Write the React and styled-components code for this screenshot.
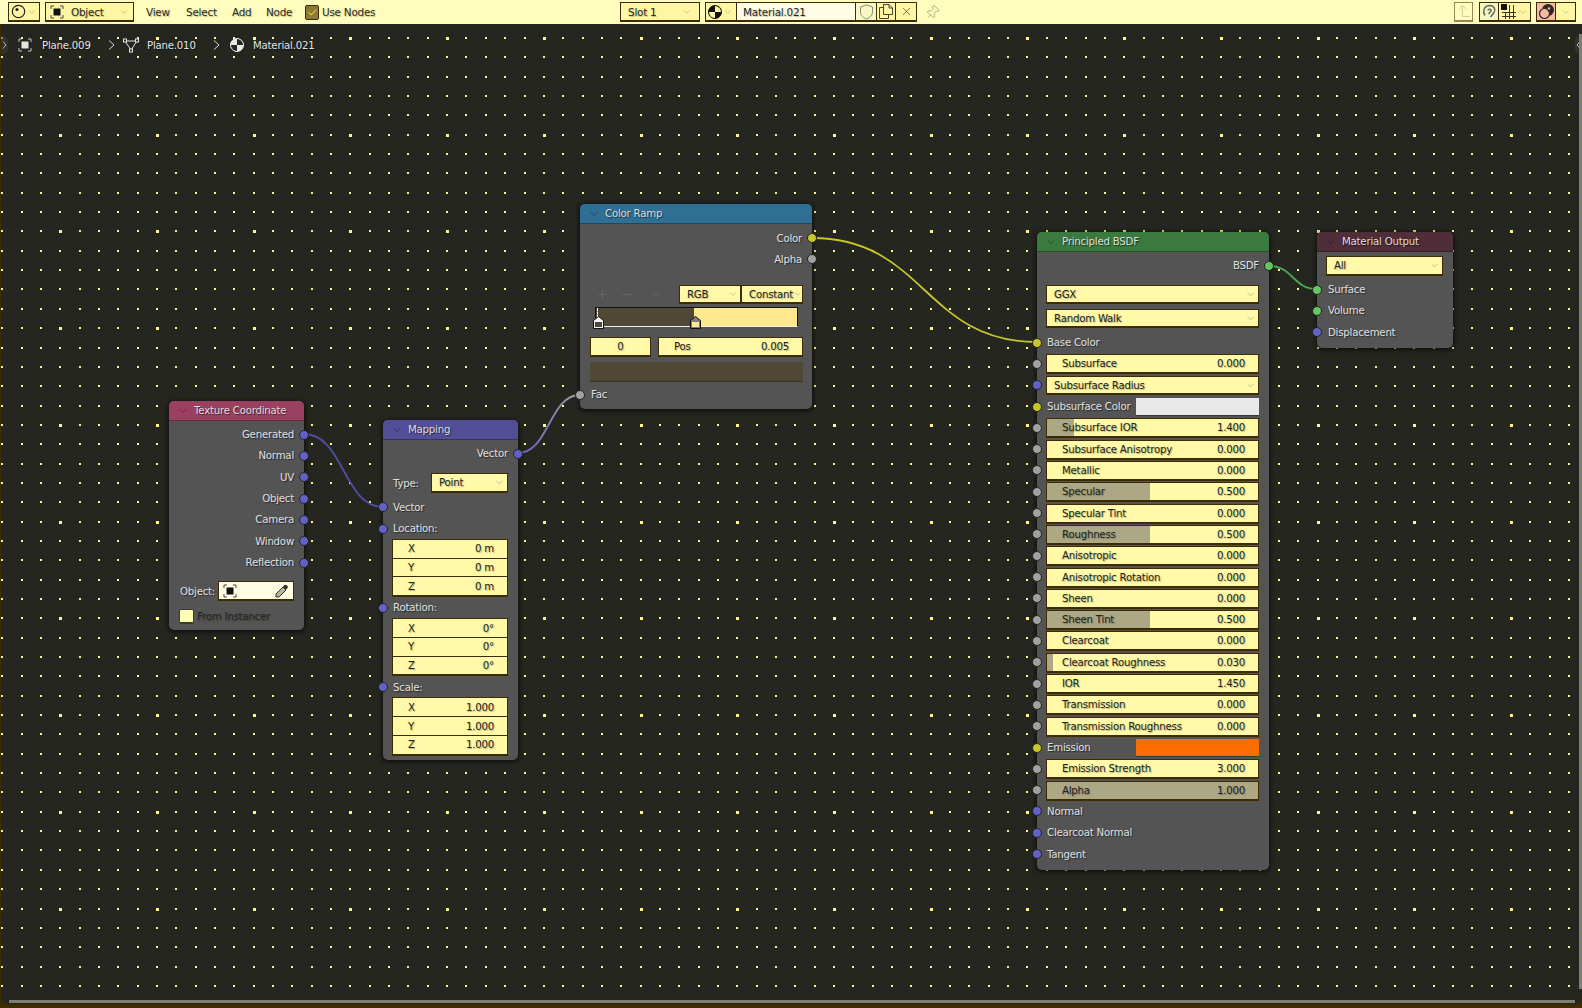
import React from 'react';
import styled, { createGlobalStyle } from 'styled-components';
import { Plus, Minus, ChevronDown, X, Pin, Check } from 'lucide-react';

const FONT = '"DejaVu Sans", "Liberation Sans", sans-serif';
const INK = '#3e2c00';

const GlobalStyle = createGlobalStyle`
  html, body { margin: 0; padding: 0; background: #fffdbe; }
  * { box-sizing: border-box; }
`;

const Page = styled.div`
  width: 1582px;
  height: 1008px;
  display: flex;
  flex-direction: column;
  overflow: hidden;
  font-family: ${FONT};
  font-size: 10.2px;
  letter-spacing: -0.22px;
  background: ${INK};
`;

const Header = styled.header`
  height: 24px;
  flex: none;
  display: flex;
  align-items: center;
  padding-left: 8px;
  background: #fffdbe;
  color: #2a2a22;
  font-size: 10.4px;
`;

const HeadButton = styled.div`
  height: 20px;
  width: ${p => p.$w}px;
  margin-left: ${p => p.$ml || 0}px;
  flex: none;
  display: flex;
  align-items: center;
  gap: ${p => p.$gap ?? 3}px;
  padding: 0 ${p => p.$pad ?? 3}px;
  background: ${p => p.$bg || '#fff6a4'};
  border: 1px solid ${INK};
  border-bottom-width: 2px;
  border-left-width: ${p => (p.$joined ? 0 : 1)}px;
  justify-content: ${p => (p.$center ? 'center' : 'flex-start')};
  color: #28281f;
  text-shadow: 1px 1px 1px rgba(0, 0, 0, 0.25);
  opacity: ${p => p.$dim || 1};
`;

const HeadText = styled.span`
  flex: 1;
  white-space: nowrap;
`;

const MenuItem = styled.span`
  width: ${p => p.$w}px;
  margin-left: ${p => p.$ml || 0}px;
  flex: none;
  color: #2d2d24;
  white-space: nowrap;
  text-shadow: 1px 1px 1px rgba(0, 0, 0, 0.25);
`;

const CheckBox = styled.span`
  width: 14px;
  height: 15px;
  margin-right: 3px;
  display: flex;
  align-items: center;
  justify-content: center;
  background: #8a7a35;
  border: 1px solid ${INK};
  border-radius: 2px;
  flex: none;
  color: #ffd21c;
`;

const Canvas = styled.main`
  position: relative;
  flex: none;
  height: 980px;
  margin-left: 1px;
  background: #262620;
  border-radius: 0 0 5px 5px;
  overflow: hidden;
`;

const Backdrop = styled.svg`
  position: absolute;
  left: -1px;
  top: -24px;
  width: 1582px;
  height: 1008px;
  pointer-events: none;
`;

const Crumbs = styled.nav`
  position: absolute;
  left: 17px;
  top: 12px;
  height: 18px;
  display: flex;
  align-items: center;
  color: #e3e3e3;
  text-shadow: 1px 1px 1px rgba(0, 0, 0, 0.6);
`;

const CrumbText = styled.span`
  width: ${p => p.$w}px;
  margin-left: ${p => p.$ml}px;
  flex: none;
  white-space: nowrap;
`;

const CrumbArrow = styled.svg`
  margin: 0 ${p => p.$right}px 0 ${p => p.$left}px;
  flex: none;
`;

const SideTab = styled.div`
  position: absolute;
  top: 12px;
  ${p => (p.$right ? 'right: 0;' : 'left: 0;')}
  width: 7px;
  height: 18px;
  display: flex;
  align-items: center;
  justify-content: center;
  background: rgba(60, 60, 60, 0.55);
  color: #b5b5b5;
  border-radius: ${p => (p.$right ? '5px 0 0 5px' : '0 5px 5px 0')};
`;

const HScroll = styled.div`
  position: absolute;
  left: 8px;
  right: 7px;
  bottom: 1px;
  height: 3px;
  background: #7f7e72;
`;

const VScroll = styled.div`
  position: absolute;
  right: 0;
  top: 10px;
  bottom: 15px;
  width: 3px;
  background: #7f7e72;
`;

const NodeBox = styled.section`
  position: absolute;
  left: ${p => p.$x - 1}px;
  top: ${p => p.$y - 24}px;
  width: ${p => p.$w}px;
  height: ${p => p.$h}px;
  background: #545454;
  border-radius: 5px;
  box-shadow: 0 1px 4px 1px rgba(0, 0, 0, 0.65);
  color: #e4e4e4;
`;

const NodeTitle = styled.div`
  height: 20px;
  display: flex;
  align-items: center;
  padding-left: 25px;
  position: relative;
  background: ${p => p.$color};
  border-radius: 5px 5px 0 0;
  border-bottom: 1px solid rgba(0, 0, 0, 0.35);
  color: #dcdcdc;
  text-shadow: 1px 1px 1px rgba(0, 0, 0, 0.55);
  white-space: nowrap;
`;

const TitleArrow = styled(ChevronDown)`
  position: absolute;
  left: 8px;
  top: 4px;
  color: rgba(0, 0, 0, 0.5);
`;

const NodeBody = styled.div`
  padding: ${p => p.$top ?? 3}px 10px 0 9px;
`;

const Row = styled.div`
  position: relative;
  height: 21.32px;
  margin-top: ${p => p.$mt || 0}px;
  display: flex;
  align-items: center;
  justify-content: ${p => (p.$right ? 'flex-end' : 'flex-start')};
  white-space: nowrap;
  text-shadow: 1px 1px 1px rgba(0, 0, 0, 0.55);
`;

const Socket = styled.span`
  position: absolute;
  top: 50%;
  ${p => (p.$out ? 'right: -15px;' : 'left: -14px;')}
  width: 10px;
  height: 10px;
  margin-top: -5px;
  border-radius: 50%;
  background: ${p => p.$color};
  border: 1px solid #23231e;
  z-index: 2;
`;

const Label = styled.span`
  padding-left: ${p => p.$indent ?? 1}px;
  color: #e0e0e0;
`;

const Field = styled.div`
  flex: ${p => (p.$w ? 'none' : 1)};
  width: ${p => (p.$w ? `${p.$w}px` : 'auto')};
  height: ${p => p.$h || 20}px;
  margin-top: ${p => p.$mt || 0}px;
  display: flex;
  align-items: center;
  justify-content: ${p => (p.$center ? 'center' : 'space-between')};
  padding: 0 ${p => p.$padR ?? 13}px 0 ${p => p.$padL ?? 15}px;
  background: ${p =>
    p.$fill
      ? `linear-gradient(to right, #aca886 ${p.$fill}%, #fff9a8 ${p.$fill}%)`
      : '#fff9a8'};
  border: 1px solid ${INK};
  border-bottom-width: 2px;
  color: #22221a;
  text-shadow: 1px 1px 1px rgba(0, 0, 0, 0.28);
  white-space: nowrap;
`;

const FieldStack = styled.div`
  height: 58.3px;
  margin-top: -0.4px;
  display: flex;
  flex-direction: column;
  border: 1px solid ${INK};
  border-bottom-width: 2px;
`;

const StackCell = styled.div`
  flex: 1;
  display: flex;
  align-items: center;
  justify-content: space-between;
  padding: 0 13px 0 15px;
  background: #fff9a8;
  color: #22221a;
  border-top: ${p => (p.$first ? 0 : `1px solid ${INK}`)};
  text-shadow: 1px 1px 1px rgba(0, 0, 0, 0.28);
`;

const Swatch = styled.div`
  margin-left: auto;
  width: ${p => p.$w}px;
  height: 18px;
  flex: none;
  background: ${p => p.$color};
  border-bottom: 1px solid #3a3a30;
`;

const Caret = styled(ChevronDown)`
  color: #a7a37a;
  flex: none;
`;

const SelectField = ({ text, mt, h = 19 }) => (
  <Field $mt={mt} $h={h} $padL={7} $padR={2}>
    <span>{text}</span>
    <Caret size={11} strokeWidth={1.4} />
  </Field>
);

// the ramp's controls sit one pixel further right than the socket rows
const RampControls = styled.div`
  margin: 0 -1px 0 1px;
`;

const RampTools = styled.div`
  height: 19px;
  margin-top: 15px;
  display: flex;
  align-items: center;
  color: #6c6c6c;
`;

const ToolSlot = styled.span`
  width: ${p => p.$w}px;
  display: flex;
  justify-content: center;
  flex: none;
`;

const RampSelects = styled.div`
  margin-left: auto;
  display: flex;
  width: 124px;
`;

const RampBar = styled.div`
  position: relative;
  height: 20px;
  margin: 3px 5px 0 5px;
  border: 1px solid #111;
  border-bottom-color: #eee;
  background: linear-gradient(to right, #4f4835 49%, #ffe88e 49%);
`;

const RampHandle = styled.svg`
  position: absolute;
  left: ${p => p.$x}px;
  top: 8px;
  overflow: visible;
`;

const RampMark = styled.span`
  position: absolute;
  left: 1px;
  top: 0;
  height: 10px;
  border-left: 1px dashed #fff;
`;

const RampFields = styled.div`
  display: flex;
  gap: 7px;
  margin-top: 10px;
`;

const ColorStrip = styled.div`
  height: 20px;
  margin-top: 5px;
  background: #4f4835;
  border-bottom: 1px solid #3a3220;
`;

const ObjectField = styled.div`
  width: 78px;
  height: 20px;
  margin-left: 3px;
  display: flex;
  align-items: center;
  justify-content: space-between;
  padding: 0 4px 0 4px;
  background: #fffee4;
  border: 1px solid ${INK};
  border-bottom-width: 2px;
`;

const InstancerRow = styled.div`
  display: flex;
  align-items: center;
  height: 16px;
  margin-top: 6px;
  gap: 3px;
  color: #26261e;
  white-space: nowrap;
  text-shadow: 1px 1px 1px rgba(0, 0, 0, 0.3);
`;

const PlainCheck = styled.span`
  width: 15px;
  height: 15px;
  margin-left: 1px;
  background: #fffcb4;
  border: 1px solid #3a3a30;
  border-bottom-width: 2px;
  border-radius: 2px;
`;

const TypeRow = styled(Row)`
  height: 20px;
  margin-top: 9px;
  justify-content: space-between;
`;

const ObjectIcon = ({ size = 14, ink = '#111', frame = '#444' }) => (
  <svg width={size} height={size} viewBox="0 0 14 14" fill="none">
    <path d="M1 4V1h3M10 1h3v3M13 10v3h-3M4 13H1v-3" stroke={frame} strokeWidth="1" />
    <rect x="3.5" y="3.5" width="7" height="7" fill={ink} />
  </svg>
);

const MeshIcon = () => (
  <svg width="16" height="15" viewBox="0 0 16 15" fill="none" stroke="#e4e4e4" strokeWidth="1">
    <path d="M2 3L8 12L14 3Z" />
    <rect x="0.5" y="1" width="3" height="3" fill="#262620" />
    <rect x="12.5" y="1" width="3" height="3" fill="#262620" />
    <rect x="6.5" y="11" width="3" height="3" fill="#262620" />
  </svg>
);

const MaterialIcon = ({ size = 14, light = '#e8e8e8', dark = '#262620', ring }) => (
  <svg width={size} height={size} viewBox="0 0 14 14">
    <circle cx="7" cy="7" r="6.5" fill={light} stroke={ring || light} strokeWidth="1" />
    <path d="M7 7V1A6 6 0 0 1 13 7Z" fill={dark} />
    <path d="M7 7V13A6 6 0 0 1 1 7Z" fill={dark} />
  </svg>
);

const SphereIcon = () => (
  <svg width="15" height="15" viewBox="0 0 15 15" fill="none" stroke="#222" strokeWidth="1.2">
    <circle cx="7.5" cy="7.5" r="6.2" />
    <circle cx="6" cy="5.5" r="1.6" fill="#222" stroke="none" />
  </svg>
);

const ShieldIcon = () => (
  <svg width="15" height="16" viewBox="0 0 15 16" fill="none" stroke="#8f8d68" strokeWidth="1">
    <path d="M7.5 1L13.5 3V8C13.5 11.5 10.5 14 7.5 15C4.5 14 1.5 11.5 1.5 8V3Z" />
  </svg>
);

const CopyIcon = () => (
  <svg width="16" height="15" viewBox="0 0 16 15" fill="none" stroke="#444" strokeWidth="1">
    <path d="M5.5 3.5H1.5V14.5H10.5V10.5" />
    <path d="M5.5 0.5H11L14.5 4V10.5H5.5Z" />
    <path d="M11 0.5V4H14.5" />
  </svg>
);

const UpIcon = () => (
  <svg width="14" height="15" viewBox="0 0 14 15" fill="none" stroke="#b0ae80" strokeWidth="1">
    <path d="M2 5L5.5 1.5L9 5M5.5 2V12.5H13" />
  </svg>
);

const MagnetIcon = () => (
  <svg width="15" height="16" viewBox="0 0 15 16" fill="none" stroke="#66665a" strokeWidth="1.5">
    <path d="M3 11.5C0.5 8 1.5 2 7.5 1.5C12.5 1.5 14 6 12 8.5L8.5 13" />
    <path d="M5.8 6.5C6.5 4.5 9.5 5 9 7L6.5 10" />
  </svg>
);

const SnapGridIcon = () => (
  <svg width="16" height="16" viewBox="0 0 16 16" fill="none" stroke="#333" strokeWidth="1">
    <rect x="0" y="0" width="6" height="6" fill="#111" stroke="none" />
    <path d="M8.5 1V15M12.5 1V15M1 8.5H15M1 12.5H15M4.5 8V15" />
  </svg>
);

const OverlayIcon = () => (
  <svg width="17" height="17" viewBox="0 0 17 17" fill="none">
    <circle cx="10" cy="7" r="6" fill="#2a2a2a" />
    <circle cx="6.5" cy="10.5" r="5" stroke="#2a2a2a" strokeWidth="1.2" fill="#f9b9a0" />
    <circle cx="11" cy="5.5" r="1.2" fill="#f9b9a0" />
  </svg>
);

const PipetteIcon = () => (
  <svg width="14" height="14" viewBox="0 0 14 14" fill="none">
    <path d="M8 3L11 6L4 13H1V10Z" fill="#b5b5a0" stroke="#333" strokeWidth="1" />
    <path d="M9 1.5C10 0.5 11 0.5 12 1.5C13.2 2.7 13.2 3.7 12 4.8L10.5 6L7.8 3Z" fill="#333" />
  </svg>
);

const Arrow = ({ left, right }) => (
  <CrumbArrow $left={left} $right={right} width="7" height="10" viewBox="0 0 7 10" fill="none" stroke="#d6d6d6" strokeWidth="1">
    <path d="M1 0.5L6 5L1 9.5" />
  </CrumbArrow>
);

const BLUE = '#6161c8';
const GREY = '#a1a1a1';
const YELLOW = '#c7c729';
const GREEN = '#63c763';

// dots of the grid: small ones every 19.34px, big ones every fifth
const gridPath = big => {
  let d = '';
  for (let i = 0; i * 19.345 < 1582; i++) {
    for (let j = 0; 38 + j * 19.345 < 1000; j++) {
      const isBig = (i - 3) % 5 === 0 && j % 5 === 0;
      if (isBig !== big) continue;
      const s = big ? 3 : 2;
      const x = Math.round(1.2 + i * 19.345);
      const y = Math.round(37 + j * 19.345);
      d += `M${x} ${y}h${s}v${s}h-${s}z`;
    }
  }
  return d;
};

const wire = (x1, y1, x2, y2) => {
  const d = (x2 - x1) * 0.5;
  return `M${x1} ${y1}C${x1 + d} ${y1} ${x2 - d} ${y2} ${x2} ${y2}`;
};

const texOutputs = ['Generated', 'Normal', 'UV', 'Object', 'Camera', 'Window', 'Reflection'];

const bsdfRows = [
  { name: 'Subsurface', socket: GREY, value: '0.000' },
  { name: 'Subsurface Radius', socket: BLUE, select: true },
  { name: 'Subsurface Color', socket: YELLOW, color: '#e8e8e8' },
  { name: 'Subsurface IOR', socket: GREY, value: '1.400', fill: 13 },
  { name: 'Subsurface Anisotropy', socket: GREY, value: '0.000' },
  { name: 'Metallic', socket: GREY, value: '0.000' },
  { name: 'Specular', socket: GREY, value: '0.500', fill: 49 },
  { name: 'Specular Tint', socket: GREY, value: '0.000' },
  { name: 'Roughness', socket: GREY, value: '0.500', fill: 49 },
  { name: 'Anisotropic', socket: GREY, value: '0.000' },
  { name: 'Anisotropic Rotation', socket: GREY, value: '0.000' },
  { name: 'Sheen', socket: GREY, value: '0.000' },
  { name: 'Sheen Tint', socket: GREY, value: '0.500', fill: 49 },
  { name: 'Clearcoat', socket: GREY, value: '0.000' },
  { name: 'Clearcoat Roughness', socket: GREY, value: '0.030', fill: 3 },
  { name: 'IOR', socket: GREY, value: '1.450' },
  { name: 'Transmission', socket: GREY, value: '0.000' },
  { name: 'Transmission Roughness', socket: GREY, value: '0.000' },
  { name: 'Emission', socket: YELLOW, color: '#ff6c00' },
  { name: 'Emission Strength', socket: GREY, value: '3.000' },
  { name: 'Alpha', socket: GREY, value: '1.000', fill: 100 },
];

const Node = ({ title, color, x, y, w, h, children, top }) => (
  <NodeBox $x={x} $y={y} $w={w} $h={h}>
    <NodeTitle $color={color}>
      <TitleArrow size={12} strokeWidth={1.4} />
      {title}
    </NodeTitle>
    <NodeBody $top={top}>{children}</NodeBody>
  </NodeBox>
);

const Vec3 = ({ values }) => (
  <FieldStack>
    {['X', 'Y', 'Z'].map((axis, i) => (
      <StackCell key={axis} $first={i === 0}>
        <span>{axis}</span>
        <span>{values}</span>
      </StackCell>
    ))}
  </FieldStack>
);

const BsdfRow = ({ row }) => (
  <Row>
    <Socket $color={row.socket} />
    {row.select && <SelectField text={row.name} mt={1} h={19} />}
    {row.color && (
      <>
        <Label>{row.name}</Label>
        <Swatch $w={123} $color={row.color} />
      </>
    )}
    {row.value && (
      <Field $fill={row.fill} $mt={1}>
        <span>{row.name}</span>
        <span>{row.value}</span>
      </Field>
    )}
  </Row>
);

const App = () => (
  <Page>
    <GlobalStyle />
    <Header>
      <HeadButton $w={32} $pad={2} $gap={1}>
        <SphereIcon />
        <Caret size={10} strokeWidth={1.4} />
      </HeadButton>
      <HeadButton $w={89} $ml={5} $gap={7} $pad={4}>
        <ObjectIcon />
        <HeadText>Object</HeadText>
        <Caret size={10} strokeWidth={1.4} />
      </HeadButton>
      <MenuItem $ml={12} $w={40}>View</MenuItem>
      <MenuItem $w={46}>Select</MenuItem>
      <MenuItem $w={34}>Add</MenuItem>
      <MenuItem $w={39}>Node</MenuItem>
      <CheckBox>
        <Check size={11} strokeWidth={2.2} />
      </CheckBox>
      <MenuItem $w={60}>Use Nodes</MenuItem>
      <HeadButton $w={80} $ml={238} $pad={7}>
        <HeadText>Slot 1</HeadText>
        <Caret size={10} strokeWidth={1.4} />
      </HeadButton>
      <HeadButton $w={32} $ml={5} $pad={2} $gap={1}>
        <MaterialIcon light="#111" dark="#fff6a4" ring="#111" />
        <Caret size={10} strokeWidth={1.4} />
      </HeadButton>
      <HeadButton $w={119} $joined $bg="#fffee4" $pad={6}>
        <HeadText>Material.021</HeadText>
      </HeadButton>
      <HeadButton $w={21} $joined $bg="#f6f8c6" $pad={0} $center>
        <ShieldIcon />
      </HeadButton>
      <HeadButton $w={19} $joined $pad={0} $center>
        <CopyIcon />
      </HeadButton>
      <HeadButton $w={21} $joined $pad={0} $center>
        <X size={13} strokeWidth={1.1} />
      </HeadButton>
      <MenuItem $ml={8} $w={15}>
        <Pin size={15} strokeWidth={1} color="#8b8a6c" style={{ transform: 'rotate(40deg)', display: 'block' }} />
      </MenuItem>
      <HeadButton $w={19} $ml={514} $dim={0.55} $pad={0} $center $bg="#fffdbe">
        <UpIcon />
      </HeadButton>
      <HeadButton $w={20} $ml={6} $pad={0} $center $bg="#f4f6c2">
        <MagnetIcon />
      </HeadButton>
      <HeadButton $w={32} $joined $pad={2} $gap={1}>
        <SnapGridIcon />
        <Caret size={10} strokeWidth={1.4} />
      </HeadButton>
      <HeadButton $w={20} $ml={5} $pad={0} $center $bg="#f9b9a0">
        <OverlayIcon />
      </HeadButton>
      <HeadButton $w={20} $joined $pad={0} $center>
        <Caret size={10} strokeWidth={1.4} />
      </HeadButton>
    </Header>

    <Canvas>
      <Backdrop viewBox="0 0 1582 1008" shapeRendering="crispEdges">
        <path d={gridPath(false)} fill="#fff58c" />
        <path d={gridPath(true)} fill="#fff58c" />
      </Backdrop>

      <Crumbs>
        <ObjectIcon ink="#e4e4e4" frame="#c4c4c4" />
        <CrumbText $ml={10} $w={50}>Plane.009</CrumbText>
        <Arrow left={16} right={8} />
        <MeshIcon />
        <CrumbText $ml={8} $w={50}>Plane.010</CrumbText>
        <Arrow left={16} right={10} />
        <MaterialIcon />
        <CrumbText $ml={9} $w={70}>Material.021</CrumbText>
      </Crumbs>
      <SideTab>
        <svg width="5" height="8" viewBox="0 0 5 8" fill="none" stroke="currentColor"><path d="M1 .5L4 4L1 7.5" /></svg>
      </SideTab>
      <SideTab $right>
        <svg width="5" height="8" viewBox="0 0 5 8" fill="none" stroke="currentColor"><path d="M4 .5L1 4L4 7.5" /></svg>
      </SideTab>
      <VScroll />
      <HScroll />

      <Node title="Texture Coordinate" color="#9c4061" x={169} y={401} w={135} h={229}>
        {texOutputs.map(name => (
          <Row key={name} $right>
            <Label>{name}</Label>
            <Socket $out $color={BLUE} />
          </Row>
        ))}
        <Row $mt={7.5}>
          <Label $indent={2}>Object:</Label>
          <ObjectField>
            <ObjectIcon ink="#111" />
            <PipetteIcon />
          </ObjectField>
        </Row>
        <InstancerRow>
          <PlainCheck />
          From Instancer
        </InstancerRow>
      </Node>

      <Node title="Mapping" color="#524f98" x={383} y={420} w={135} h={340}>
        <Row $right>
          <Label>Vector</Label>
          <Socket $out $color={BLUE} />
        </Row>
        <TypeRow>
          <Label>Type:</Label>
          <Field $w={77} $h={20} $padL={7} $padR={2}>
            <span>Point</span>
            <Caret size={11} strokeWidth={1.4} />
          </Field>
        </TypeRow>
        <Row $mt={3.4}>
          <Label>Vector</Label>
          <Socket $color={BLUE} />
        </Row>
        <Row>
          <Label>Location:</Label>
          <Socket $color={BLUE} />
        </Row>
        <Vec3 values="0 m" />
        <Row>
          <Label>Rotation:</Label>
          <Socket $color={BLUE} />
        </Row>
        <Vec3 values="0°" />
        <Row>
          <Label>Scale:</Label>
          <Socket $color={BLUE} />
        </Row>
        <Vec3 values="1.000" />
      </Node>

      <Node title="Color Ramp" color="#2f6f93" x={580} y={204} w={232} h={205} top={3.4}>
        <Row $right>
          <Label>Color</Label>
          <Socket $out $color={YELLOW} />
        </Row>
        <Row $right>
          <Label>Alpha</Label>
          <Socket $out $color={GREY} />
        </Row>
        <RampControls>
          <RampTools>
            <ToolSlot $w={24}><Plus size={13} strokeWidth={1.4} /></ToolSlot>
            <ToolSlot $w={24}><Minus size={13} strokeWidth={1.4} /></ToolSlot>
            <ToolSlot $w={34}><ChevronDown size={13} strokeWidth={1.4} /></ToolSlot>
            <RampSelects>
              <Field $w={62} $h={19} $padL={7} $padR={2}>
                <span>RGB</span>
                <Caret size={10} strokeWidth={1.4} />
              </Field>
              <Field $w={62} $h={19} $padL={7} $padR={1}>
                <span>Constant</span>
                <Caret size={10} strokeWidth={1.4} />
              </Field>
            </RampSelects>
          </RampTools>
          <RampBar>
            <RampMark />
            <RampHandle $x={-3} width="11" height="13" viewBox="0 0 11 13">
              <path d="M5.5 .5L10.5 4.5V12.5H.5V4.5Z" fill="#f4f4f4" stroke="#111" />
              <rect x="2" y="6" width="7" height="5" fill="#4f4835" />
            </RampHandle>
            <RampHandle $x={94} width="11" height="13" viewBox="0 0 11 13">
              <path d="M5.5 .5L10.5 4.5V12.5H.5V4.5Z" fill="#7d7d7d" stroke="#111" />
              <rect x="2" y="6" width="7" height="5" fill="#ffe88e" />
            </RampHandle>
          </RampBar>
          <RampFields>
            <Field $w={61} $h={20} $center $padL={0} $padR={0}>0</Field>
            <Field $h={20}>
              <span>Pos</span>
              <span>0.005</span>
            </Field>
          </RampFields>
          <ColorStrip />
        </RampControls>
        <Row $mt={2}>
          <Label $indent={2}>Fac</Label>
          <Socket $color={GREY} />
        </Row>
      </Node>

      <Node title="Principled BSDF" color="#3a7a3e" x={1037} y={232} w={232} h={638}>
        <Row $right>
          <Label>BSDF</Label>
          <Socket $out $color={GREEN} />
        </Row>
        <SelectField text="GGX" mt={9} />
        <SelectField text="Random Walk" mt={5} />
        <Row $mt={3.6}>
          <Label>Base Color</Label>
          <Socket $color={YELLOW} />
        </Row>
        {bsdfRows.map(row => (
          <BsdfRow key={row.name} row={row} />
        ))}
        {['Normal', 'Clearcoat Normal', 'Tangent'].map(name => (
          <Row key={name}>
            <Label>{name}</Label>
            <Socket $color={BLUE} />
          </Row>
        ))}
      </Node>

      <Node title="Material Output" color="#4f2d39" x={1317} y={232} w={136} h={116} top={4}>
        <SelectField text="All" h={20} />
        <Row $mt={3}>
          <Label $indent={2}>Surface</Label>
          <Socket $color={GREEN} />
        </Row>
        <Row>
          <Label $indent={2}>Volume</Label>
          <Socket $color={GREEN} />
        </Row>
        <Row>
          <Label $indent={2}>Displacement</Label>
          <Socket $color={BLUE} />
        </Row>
      </Node>

      <Backdrop viewBox="0 0 1582 1008" fill="none" strokeWidth="1.8">
        <defs>
          <linearGradient id="mapToRamp" gradientUnits="userSpaceOnUse" x1="518" y1="0" x2="580" y2="0">
            <stop offset="0" stopColor="#6161c8" />
            <stop offset="1" stopColor="#a1a1a1" />
          </linearGradient>
        </defs>
        <path d={wire(304, 434, 383, 507)} stroke="#4f4fa6" />
        <path d={wire(518, 453, 580, 395)} stroke="url(#mapToRamp)" />
        <path d={wire(812, 238, 1037, 342)} stroke="#c4c42c" />
        <path d={wire(1269, 266, 1317, 289)} stroke="#4aa850" />
      </Backdrop>
    </Canvas>
  </Page>
);

export default App;
